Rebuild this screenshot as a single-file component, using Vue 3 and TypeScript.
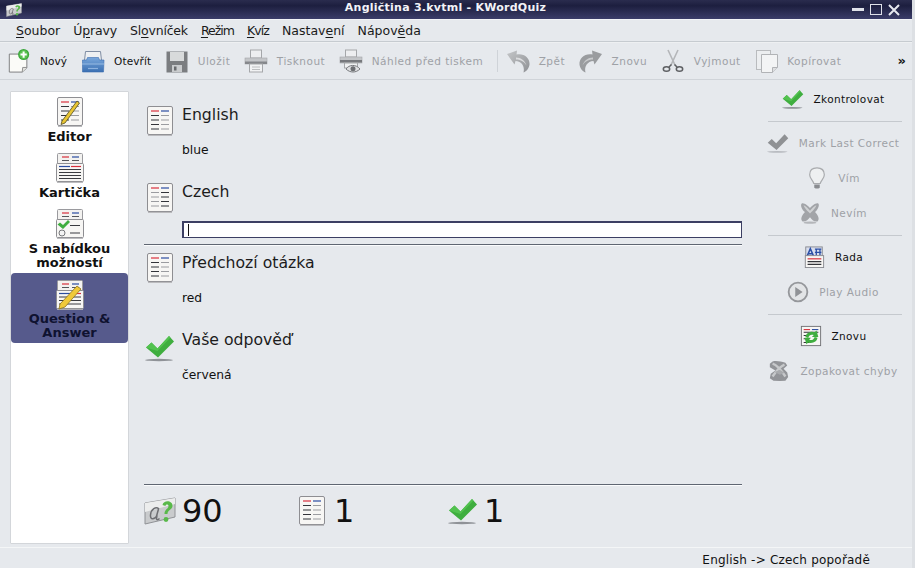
<script setup lang="ts">
interface Tool { icon: string; label: string; off?: boolean; sepBefore?: boolean }
const menus: [string, string, string][] = [
  ['', 'S', 'oubor'], ['Ú', 'p', 'ravy'], ['Sl', 'o', 'vníček'], ['', 'R', 'ežim'],
  ['', 'K', 'víz'], ['Nastav', 'e', 'ní'], ['Nápov', 'ě', 'da'],
]
const tools: Tool[] = [
  { icon: 'new', label: 'Nový' }, { icon: 'open', label: 'Otevřít' },
  { icon: 'save', label: 'Uložit', off: true }, { icon: 'print', label: 'Tisknout', off: true },
  { icon: 'preview', label: 'Náhled před tiskem', off: true },
  { icon: 'undo', label: 'Zpět', off: true, sepBefore: true }, { icon: 'redo', label: 'Znovu', off: true },
  { icon: 'cut', label: 'Vyjmout', off: true }, { icon: 'copy', label: 'Kopírovat', off: true },
]
const modes = [
  { icon: 'm-editor', label: 'Editor' }, { icon: 'm-card', label: 'Kartička' },
  { icon: 'm-multi', label: 'S nabídkou možností' }, { icon: 'm-qa', label: 'Question & Answer', active: true },
]
const side: ({ icon: string; label: string; off?: boolean } | null)[] = [
  { icon: 'check', label: 'Zkontrolovat' }, null,
  { icon: 'check-off', label: 'Mark Last Correct', off: true }, { icon: 'bulb', label: 'Vím', off: true },
  { icon: 'x-off', label: 'Nevím', off: true }, null,
  { icon: 'hint', label: 'Rada' }, { icon: 'play', label: 'Play Audio', off: true }, null,
  { icon: 'repeat', label: 'Znovu' }, { icon: 'x2-off', label: 'Zopakovat chyby', off: true },
]
</script>

<template>
  <div class="win">
    <svg class="defs" width="0" height="0" aria-hidden="true">
      <defs>
        <linearGradient id="blue" x1="0" y1="0" x2="0" y2="1"><stop offset="0" stop-color="#7aa8dc"/><stop offset="1" stop-color="#3a6fb2"/></linearGradient>
        <linearGradient id="swirl" x1="0" y1="0" x2="1" y2="1"><stop offset="0" stop-color="#c4c6c8"/><stop offset="1" stop-color="#8f9195"/></linearGradient>
        <symbol id="sheet" viewBox="0 0 26 30">
          <rect x="0.5" y="0.5" width="25" height="28" rx="1.5" fill="#f7f6f4" stroke="#8e8e92"/>
          <path d="M1 29.4h24" stroke="#b5b5b8"/>
          <path d="M4 5h8" stroke="#d8303c" stroke-width="1.2"/><path d="M14 5h8" stroke="#2a4ca0" stroke-width="1.2"/>
          <path d="M4 9.5h8M4 14h8M4 18.5h8M4 23h8" stroke="#33343a" stroke-width="1.1"/>
          <path d="M14 9.5h8M14 14h8M14 18.5h8M14 23h8" stroke="#9b9ca0" stroke-width="1.1"/>
        </symbol>
        <symbol id="sheet2" viewBox="0 0 26 30">
          <rect x="0.5" y="0.5" width="25" height="28" rx="1.5" fill="#f7f6f4" stroke="#8e8e92"/>
          <path d="M1 29.4h24" stroke="#b5b5b8"/>
          <path d="M4 5h8" stroke="#d8303c" stroke-width="1.2"/><path d="M14 5h8" stroke="#2a4ca0" stroke-width="1.2"/>
          <path d="M4 9.5h8M4 14h8M4 18.5h8M4 23h8" stroke="#9b9ca0" stroke-width="1.1"/>
          <path d="M14 9.5h8M14 14h8M14 18.5h8M14 23h8" stroke="#33343a" stroke-width="1.1"/>
        </symbol>
        <symbol id="check" viewBox="0 0 30 30">
          <ellipse cx="14" cy="27" rx="14" ry="1.2" fill="#8f9297"/>
          <path d="M1 14.5l5.5-5 6 6L24 3l5 5.5L13 24.500z" fill="#3fae3f"/>
          <path d="M1 14.500l5.500-5 6 6L24 3l1.500 1.500L12.500 18z" fill="#52c24f"/>
        </symbol>
        <symbol id="check-off" viewBox="0 0 30 30">
          <ellipse cx="14" cy="27" rx="14" ry="1.200" fill="#b8bbc0"/>
          <path d="M1 14.500l5.500-5 6 6L24 3l5 5.500L13 24.500z" fill="#8f9194"/>
        </symbol>
        <symbol id="new" viewBox="0 0 24 26">
          <path d="M1.500 5.500h13l6 3v12l-5 4.500h-14z" fill="#fbfbf8" stroke="#77787a"/>
          <path d="M15.500 25l.500-5h4.500" fill="#e3e3df" stroke="#8a8a8a"/>
          <circle cx="17" cy="6" r="6" fill="#3aa63a"/><circle cx="17" cy="6" r="4.800" fill="#5ac04f"/>
          <path d="M17 2.600v6.800M13.600 6h6.800" stroke="#fff" stroke-width="2.200"/>
        </symbol>
        <symbol id="open" viewBox="0 0 24 24">
          <path d="M4.500 2.500h15l1 9h-17z" fill="#eef0f2" stroke="#7f8da3"/>
          <path d="M1.500 11h4l1-2.500h11l1 2.500h4.500l-.5 12h-21z" fill="url(#blue)" stroke="#3a6db0" stroke-width=".6"/>
          <path d="M1 15h22" stroke="#a6c6ea" stroke-width=".8"/>
          <path d="M7 19.500h10" stroke="#8db2df" stroke-width="1.200"/>
        </symbol>
        <symbol id="save" viewBox="0 0 24 24">
          <path d="M1.500 2.500h21v21h-21z" fill="#7b7d80"/>
          <rect x="5" y="3" width="14" height="9" fill="#d8dadb"/>
          <rect x="7" y="16" width="10" height="7" fill="#c9cbcd"/><rect x="9" y="17.500" width="2.500" height="4" fill="#696b6e"/>
        </symbol>
        <symbol id="print" viewBox="0 0 24 24">
          <rect x="6.500" y="1" width="11" height="8" fill="#edeef0" stroke="#a5a7aa"/>
          <rect x="1" y="9" width="22" height="6" fill="#c3c5c8" stroke="#a5a7aa" stroke-width=".6"/>
          <rect x="1" y="12.500" width="22" height="2.500" fill="#85878b"/>
          <rect x="5.500" y="15" width="13" height="8" fill="#f1f2f3" stroke="#a5a7aa"/>
          <path d="M8 18h8M8 20.500h8" stroke="#bcbec0"/>
        </symbol>
        <symbol id="preview" viewBox="0 0 24 24">
          <rect x="6.500" y="1" width="11" height="7" fill="#edeef0" stroke="#a5a7aa"/>
          <rect x="1" y="8" width="22" height="6" fill="#c3c5c8" stroke="#a5a7aa" stroke-width=".6"/>
          <rect x="1" y="11" width="22" height="2.500" fill="#77797d"/>
          <rect x="5.500" y="14" width="13" height="5" fill="#f1f2f3" stroke="#a5a7aa"/>
          <path d="M7 20c3-4.500 10-5 14 0-4 4-10 4-14 0z" fill="#dfe0e2" stroke="#77797d"/>
          <circle cx="14" cy="19.800" r="2.500" fill="#6d6f73"/>
        </symbol>
        <symbol id="undo" viewBox="0 0 24 24">
          <path d="M1 5l10-3.500-.5 4C18 4 24 9 23.500 15.500c-.3 3.500-3 7-6 8C19 17 15.500 12.500 9.500 12l-1 3.500z" fill="url(#swirl)"/>
          <path d="M10 8.500c5 0 9 3 10.500 8-2-3.500-5.500-6-10.500-6z" fill="#dcdddf"/>
        </symbol>
        <symbol id="redo" viewBox="0 0 24 24">
          <path d="M23 5L13 1.500l.5 4C6 4 0 9 .5 15.500c.3 3.500 3 7 6 8C5 17 8.500 12.500 14.500 12l1 3.500z" fill="#9a9c9f"/>
          <path d="M14 8.500c-5 0-9 3-10.500 8 2-3.500 5.500-6 10.500-6z" fill="#c9cbcd"/>
        </symbol>
        <symbol id="cut" viewBox="0 0 24 24">
          <path d="M7 1l7 15M17 1l-7 15" stroke="#b4b6b9" stroke-width="1.600" fill="none"/>
          <ellipse cx="5.500" cy="20" rx="3.200" ry="2.300" fill="none" stroke="#5e6063" stroke-width="1.500"/>
          <ellipse cx="18.500" cy="20" rx="3.200" ry="2.300" fill="none" stroke="#5e6063" stroke-width="1.500"/>
          <path d="M8 18l2.500-2.500M16 18l-2.500-2.500" stroke="#5e6063" stroke-width="1.500"/>
        </symbol>
        <symbol id="copy" viewBox="0 0 24 24">
          <rect x="1.500" y="1.500" width="14" height="19" fill="#eceef0" stroke="#b9bbbe"/>
          <path d="M6.500 5.500h16v13l-5 5h-11z" fill="#f3f4f5" stroke="#b1b3b6"/>
          <path d="M17.500 23.500v-5h5" fill="#dedfe1" stroke="#b1b3b6"/>
        </symbol>
        <symbol id="bulb" viewBox="0 0 24 24">
          <path d="M12 1c-5 0-8 3-8 7.500 0 4 3.500 5.500 4.500 9.500h7c1-4 4.500-5.500 4.500-9.500C20 4 17 1 12 1z" fill="#eef0f1" stroke="#a9abae" stroke-width="1.300"/>
          <path d="M9 19h6v3.500l-1.500 1h-3L9 22.500z" fill="#8a8c90"/>
        </symbol>
        <symbol id="x-off" viewBox="0 0 24 24">
          <path d="M3 1.500c3-1 7 3 9 5 2-2 6-6 9-5 2 2-1 7-3.500 9.500 2.500 2.500 5.500 7 3 10-4 1-6.500-2-8.500-4.500-2 2.500-5 5.500-8.500 4.500-2.500-3 .5-7.500 3-10C3.500 8.500 1 3.500 3 1.500z" fill="#a2a4a8"/>
          <path d="M5 3.500c2 .5 5 3.500 7 6 2-2.500 5-5.500 7-6-1 3-3.500 5.500-5.500 7.500L12 12.500 10.500 11C8.500 9 6 6.500 5 3.500z" fill="#cfd1d3"/>
          <ellipse cx="12" cy="22.500" rx="7" ry="1.300" fill="#b4b6ba"/>
        </symbol>
        <symbol id="x2-off" viewBox="0 0 24 24">
          <path d="M5 1.500c4-1 9 0 14 1.500l2 3-4 3.500 4 4 1 5-3 4-6 0.500-7-.5-4-2.500 1-5 5-3.500-6-3.500V4z" fill="#929498"/>
          <path d="M5 4c5 1.500 10 8 14 14M18 5C13 7 9 12 5 18" stroke="#c7c9cb" stroke-width="2.600" fill="none"/>
          <path d="M7 13l6-2 5 3-5 2z" fill="#a8aaad"/>
        </symbol>
        <symbol id="hint" viewBox="0 0 24 24">
          <rect x="3" y="1" width="18" height="12" fill="#d8deee" stroke="#87898f"/>
          <path d="M4.500 11l3.500-8 3.500 8M6 8.500h4" stroke="#2b4fa5" stroke-width="1.700" fill="none"/><path d="M13 3.500h7M14.500 3.500v6.500M18.500 3.500v6.500M13 7h7" stroke="#2b4fa5" stroke-width="1.400"/>
          <rect x="2.500" y="10.500" width="20" height="13" fill="#f7f6f4" stroke="#87898f"/>
          <path d="M5 14h15" stroke="#d8303c" stroke-width="1.300"/><path d="M5 17h15M5 20h15" stroke="#34353a" stroke-width="1.200"/>
        </symbol>
        <symbol id="play" viewBox="0 0 24 24">
          <circle cx="12" cy="12" r="10.200" fill="#e2e4e6" stroke="#95979b" stroke-width="2"/>
          <path d="M9 6.500l8 5.500-8 5.500z" fill="#909296"/>
        </symbol>
        <symbol id="repeat" viewBox="0 0 24 24">
          <rect x="1.500" y="1.500" width="21" height="21" fill="#f7f6f4" stroke="#6f7074"/>
          <path d="M4 5h7" stroke="#d8303c" stroke-width="1.200"/><path d="M13 5h7" stroke="#2a4ca0" stroke-width="1.200"/>
          <path d="M4 8h16M4 11.500h4M4 15h4M4 19h6" stroke="#34353a" stroke-width="1.100"/>
          <path d="M6 13c0-4 6-7 10-5l2-2 2 7h-7l2-2c-3-1-5 0-6 3zM19 14c0 4-6 7-10 5l-2 2-2-7h7l-2 2c3 1 5 0 6-3z" fill="#3fae3f"/>
        </symbol>
        <symbol id="m-editor" viewBox="0 0 26 30">
          <use href="#sheet"/>
          <path d="M5 24L20 4l2.500 2L8 26l-4 1.500z" fill="#e8c533" stroke="#4f4a20" stroke-width=".8"/>
        </symbol>
        <symbol id="m-card" viewBox="0 0 28 30">
          <rect x="1.500" y="0.500" width="25" height="14" rx="1" fill="#f3f2f0" stroke="#9a9a9e"/>
          <path d="M6 4h7" stroke="#d8303c" stroke-width="1.200"/><path d="M16 4h7" stroke="#2a4ca0" stroke-width="1.200"/><path d="M6 7.500h7M16 7.500h7" stroke="#55565a"/>
          <rect x="0.500" y="10.500" width="27" height="18" rx="1" fill="#f7f6f4" stroke="#8e8e92"/>
          <path d="M1 29.400h26" stroke="#b5b5b8"/>
          <path d="M3 13.500h11" stroke="#2a4ca0" stroke-width="1.200"/><path d="M15 13.500h10" stroke="#d8303c" stroke-width="1.200"/>
          <path d="M3 16.500h22M3 19.500h22M3 22.500h22M3 25.500h22" stroke="#3a3b40" stroke-width="1.100"/>
        </symbol>
        <symbol id="m-multi" viewBox="0 0 28 30">
          <rect x="1.500" y="0.500" width="25" height="14" rx="1" fill="#f3f2f0" stroke="#9a9a9e"/>
          <path d="M6 4h7" stroke="#d8303c" stroke-width="1.200"/><path d="M16 4h7" stroke="#2a4ca0" stroke-width="1.200"/><path d="M6 7.500h7M16 7.500h7" stroke="#55565a"/>
          <rect x="0.500" y="10.500" width="27" height="18" rx="1" fill="#f7f6f4" stroke="#8e8e92"/>
          <path d="M1 29.400h26" stroke="#b5b5b8"/>
          <path d="M1.500 15.500l2.500-2 3 2.500 5-5 2 2-7 7z" fill="#3fae3f"/>
          <circle cx="6" cy="24" r="3" fill="#f3f3f3" stroke="#77787b"/>
          <path d="M14 16.500h10M14 24h10" stroke="#3a3b40" stroke-width="1.200"/>
        </symbol>
        <symbol id="m-qa" viewBox="0 0 28 30">
          <rect x="1.500" y="0.500" width="25" height="14" rx="1" fill="#f3f2f0" stroke="#9a9a9e"/>
          <path d="M6 4h7" stroke="#d8303c" stroke-width="1.200"/><path d="M16 4h7" stroke="#2a4ca0" stroke-width="1.200"/><path d="M6 7.500h7M16 7.500h7" stroke="#55565a"/>
          <rect x="0.500" y="10.500" width="27" height="18" rx="1" fill="#f7f6f4" stroke="#8e8e92"/>
          <path d="M1 29.400h26" stroke="#b5b5b8"/>
          <path d="M3 13.500h11" stroke="#2a4ca0" stroke-width="1.200"/><path d="M15 13.500h10" stroke="#d8303c" stroke-width="1.200"/>
          <path d="M3 17h22M3 20.500h22M3 24h22" stroke="#3a3b40" stroke-width="1.100"/>
          <path d="M4 24L21 6l4 3L9 27l-6 2z" fill="#f0c93a" stroke="#8c7420" stroke-width=".8"/>
        </symbol>
        <symbol id="count" viewBox="0 0 32 28">
          <path d="M1 6l30-5v19L1 27z" fill="#c9cbcd" stroke="#909296"/>
          <path d="M1 6l30-5v6L1 15z" fill="#eceded"/>
          <path d="M15 12c-3-3-8 0-8.500 6-.5 5 4 5 6.500.5l-.5 3c-.2 1.500 1.500 1.500 3 0M14.500 12l-2.500 9" fill="none" stroke="#6d6e72" stroke-width="1.500"/>
          <path d="M18.500 8c1-5 10-5 10 1 0 3.500-5 4-5 8h-3c0-5 4-5 4-8 0-2-3-2-3 0z" fill="#59b94a"/>
          <circle cx="22" cy="22.500" r="2.400" fill="#59b94a"/>
        </symbol>
      </defs>
    </svg>

    <header class="titlebar">
      <svg class="appicon"><use href="#count"/></svg>
      <span class="title">Angličtina 3.kvtml - KWordQuiz</span>
      <div class="winbtns">
        <span class="min"></span><span class="max"></span>
        <svg class="close" viewBox="0 0 12 12"><path d="M1 1l10 10M11 1L1 11" stroke="#e6e8ef" stroke-width="2"/></svg>
      </div>
    </header>

    <nav class="menubar">
      <span v-for="m in menus" :key="m[1] + m[2]" class="menu">{{ m[0] }}<u>{{ m[1] }}</u>{{ m[2] }}</span>
    </nav>

    <div class="toolbar">
      <template v-for="t in tools" :key="t.label">
        <span v-if="t.sepBefore" class="tsep"></span>
        <div class="tool" :class="{ off: t.off }">
          <svg class="ticon"><use :href="'#' + t.icon"/></svg>
          <span>{{ t.label }}</span>
        </div>
      </template>
      <span class="more">»</span>
    </div>

    <main class="body">
      <aside class="modes">
        <div v-for="m in modes" :key="m.label" class="mode" :class="{ active: m.active }">
          <svg class="micon"><use :href="'#' + m.icon"/></svg>
          <span>{{ m.label }}</span>
        </div>
      </aside>

      <section class="center">
        <div class="block first">
          <svg class="bigicon"><use href="#sheet"/></svg>
          <div class="btext"><h2>English</h2><p>blue</p></div>
        </div>
        <div class="block second">
          <svg class="bigicon"><use href="#sheet2"/></svg>
          <div class="btext">
            <h2>Czech</h2>
            <div class="input"><i class="caret"></i></div>
          </div>
        </div>
        <hr class="rule" />
        <div class="block third">
          <svg class="bigicon"><use href="#sheet"/></svg>
          <div class="btext"><h2>Předchozí otázka</h2><p>red</p></div>
        </div>
        <div class="block fourth">
          <svg class="bigicon chk"><use href="#check"/></svg>
          <div class="btext"><h2>Vaše odpověď</h2><p>červená</p></div>
        </div>
        <div class="spacer"></div>
        <hr class="rule" />
        <div class="score">
          <div class="sc s1"><svg class="scicon"><use href="#count"/></svg><b>90</b></div>
          <div class="sc s2"><svg class="scicon sheet"><use href="#sheet"/></svg><b>1</b></div>
          <div class="sc s3"><svg class="scicon chk2"><use href="#check"/></svg><b>1</b></div>
        </div>
      </section>

      <aside class="side">
        <template v-for="(s, i) in side" :key="i">
          <div v-if="!s" class="ssep"></div>
          <div v-else class="sbtn" :class="{ off: s.off }">
            <svg class="sicon"><use :href="'#' + s.icon"/></svg>
            <span>{{ s.label }}</span>
          </div>
        </template>
      </aside>
    </main>

    <footer class="status">English -&gt; Czech popořadě</footer>
  </div>
</template>

<style>
html, body { margin: 0; background: #e6e9ed; overflow: hidden; }
</style>

<style scoped>
.win { width: 915px; height: 568px; display: flex; flex-direction: column; background: #e6e9ed; color: #111; font-family: "DejaVu Sans", sans-serif; overflow: hidden; box-sizing: border-box; border-right: 3px solid #dde0e4; }
.defs { position: absolute; }
.titlebar { height: 19px; flex: none; display: flex; align-items: center; position: relative; background: linear-gradient(#2a2c4e, #1d1f3f 30%, #3b3d69); border-bottom: 1px solid #f2f4f6; margin-right: -3px; }
.appicon { width: 16px; height: 14px; margin-left: 6px; flex: none; }
.title { position: absolute; left: 0; right: 24px; top: 1px; text-align: center; color: #f2f3f7; font-size: 11px; line-height: 13px; font-weight: 700; letter-spacing: 0.25px; }
.winbtns { margin-left: auto; display: flex; align-items: center; gap: 6px; padding-right: 15px; }
.min { width: 12px; height: 3px; background: #dfe1e9; }
.max { width: 10px; height: 9px; border: 1px solid #dfe1e9; }
.close { width: 12px; height: 12px; }
.menubar { height: 21px; flex: none; display: flex; align-items: center; gap: 13px; padding-left: 16px; font-size: 12.5px; border-bottom: 1px solid #c6cbd0; color: #1a1a1a; }
.menu u { text-underline-offset: 2px; }
.menu:nth-child(2) { letter-spacing: -0.15px; }
.menu:nth-child(3) { letter-spacing: -0.2px; }
.menu:nth-child(4) { letter-spacing: -1px; }
.menu:nth-child(5) { letter-spacing: -0.9px; }
.toolbar { height: 36px; flex: none; display: flex; align-items: center; padding-left: 7px; gap: 14px; font-size: 10.5px; border-bottom: 1px solid #d0d4d9; border-top: 1px solid #eef0f2; position: relative; }
.tool { display: flex; align-items: center; gap: 9px; white-space: nowrap; letter-spacing: 0.1px; }
.tool.off { color: #9ea1a6; letter-spacing: 0.5px; gap: 8.5px; }
.ticon { width: 24px; height: 24px; flex: none; }
.tsep { width: 1px; height: 22px; background: #cfd3d8; margin-right: -6px; }
.more { position: absolute; right: 6px; top: 10px; font-size: 13px; font-weight: 700; }
.body { flex: 1; min-height: 0; display: flex; padding: 11px 0 0 10px; }
.modes { width: 117px; height: 446px; flex: none; background: #fff; border: 1px solid #d3d6da; display: flex; flex-direction: column; padding-top: 5px; border-radius: 1px; box-sizing: content-box; }
.mode { display: flex; flex-direction: column; align-items: center; font-size: 13px; font-weight: 700; line-height: 14px; text-align: center; height: 56px; box-sizing: border-box; padding: 0 10px; }
.mode span { margin-top: 3px; }
.mode:nth-child(3) { height: 64px; }
.mode.active { background: #565a8c; border-radius: 4px; color: #0f1230; height: 70px; padding-top: 7px; }
.mode.active span { margin-top: 2px; }
.micon { width: 28px; height: 30px; flex: none; }
.center { width: 598px; flex: none; margin-left: 15px; display: flex; flex-direction: column; height: 449px; }
.block { display: flex; gap: 9px; }
.bigicon { width: 26px; height: 30px; margin: 3px 0 0 3px; flex: none; }
.btext { flex: 1; min-width: 0; }
h2 { margin: 0; font-size: 15.7px; font-weight: 400; line-height: 24px; color: #1c1c1c; }
p { margin: 15px 0 0; font-size: 12.3px; line-height: 16px; color: #111; }
.first { margin-top: 12px; }
.second { margin-top: 22px; }
.input { height: 14px; margin-top: 17px; border-style: solid; border-color: #3c3f63; background: #fff; border-width: 2px 1px 1px 2px; width: 557px; position: relative; }
.caret { position: absolute; left: 4px; top: 1px; bottom: 1px; width: 1px; background: #111; }
.rule { border: 0; border-top: 1px solid #5f6672; border-bottom: 1px solid #fbfcfd; margin: 0; height: 0; flex: none; }
.second + .rule { margin-top: 6px; }
.third { margin-top: 5px; }
.third .bigicon { margin-top: 2px; }
.fourth { margin-top: 22px; }
.bigicon.chk { width: 30px; height: 30px; margin: 5px -2px 0 1px; }
.spacer { flex: 1; }
.score { display: flex; height: 50px; align-items: center; padding-bottom: 4px; }
.sc { display: flex; align-items: center; gap: 6px; font-size: 32px; }
.sc b { font-weight: 400; }
.s1 { width: 155px; }
.s2 { width: 149px; gap: 9px; }
.scicon { width: 32px; height: 28px; flex: none; }
.scicon.sheet { width: 26px; height: 30px; }
.scicon.chk2 { width: 30px; height: 30px; }
.side { width: 134px; margin-left: 26px; flex: none; display: flex; flex-direction: column; margin-top: -10px; }
.sbtn { height: 35px; flex: none; display: flex; align-items: center; justify-content: center; gap: 10px; font-size: 10.5px; white-space: nowrap; letter-spacing: 0.35px; padding-right: 4px; }
.sbtn.off { color: #9ea1a6; letter-spacing: 0.45px; }
.sicon { width: 22px; height: 22px; flex: none; }
.ssep { height: 1px; margin: 5px 0 3px; background: #c5c9ce; flex: none; }
.status { height: 20px; flex: none; padding-right: 42px; text-align: right; font-size: 12px; line-height: 24px; letter-spacing: 0.2px; border-top: 1px solid #f4f6f7; }
</style>
